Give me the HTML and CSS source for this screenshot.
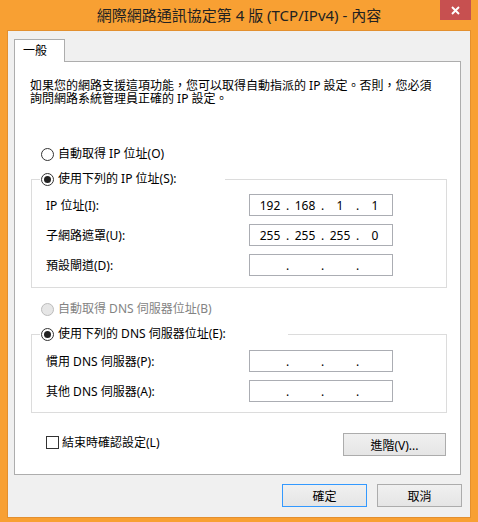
FILE: index.html
```html
<!DOCTYPE html>
<html lang="zh-Hant">

<head>
	<meta charset="UTF-8">
	<meta name="viewport" content="width=device-width, initial-scale=1.0">
	<title>網際網路通訊協定第 4 版 (TCP/IPv4) - 內容</title>
	<link rel="stylesheet" href="styles.css">
</head>

<body>
	<div class="window">
		<div class="titlebar">
			<div class="title">網際網路通訊協定第 4 版 (TCP/IPv4) - 內容</div>
			<div class="close">
				<svg width="9" height="9" viewBox="0 0 9 9">
					<path d="M1 1 L8 8 M8 1 L1 8" stroke="#fff" stroke-width="1.9" fill="none" />
				</svg>
			</div>
		</div>

		<div class="client">
			<div class="tabs">
				<div class="tab">一般</div>
			</div>

			<div class="panel">
				<div class="desc">
					<div>如果您的網路支援這項功能，您可以取得自動指派的 IP 設定。否則，您必須</div>
					<div>詢問網路系統管理員正確的 IP 設定。</div>
				</div>

				<div class="option auto-ip">
					<span class="radio"></span>自動取得 IP 位址(O)
				</div>

				<fieldset class="group group-ip">
					<legend class="option legend-ip"><span class="radio checked"></span>使用下列的 IP 位址(S):</legend>
					<div class="fields">
						<div class="field">
							<span>IP 位址(I):</span>
							<div class="ipbox">
								<span class="octet">192</span><span class="dot">.</span><span class="octet">168</span><span class="dot">.</span><span class="octet">1</span><span class="dot">.</span><span class="octet">1</span>
							</div>
						</div>
						<div class="field">
							<span>子網路遮罩(U):</span>
							<div class="ipbox">
								<span class="octet">255</span><span class="dot">.</span><span class="octet">255</span><span class="dot">.</span><span class="octet">255</span><span class="dot">.</span><span class="octet">0</span>
							</div>
						</div>
						<div class="field">
							<span>預設閘道(D):</span>
							<div class="ipbox">
								<span class="octet"></span><span class="dot">.</span><span class="octet"></span><span class="dot">.</span><span class="octet"></span><span class="dot">.</span><span class="octet"></span>
							</div>
						</div>
					</div>
				</fieldset>

				<div class="option auto-dns disabled">
					<span class="radio"></span>自動取得 DNS 伺服器位址(B)
				</div>

				<fieldset class="group group-dns">
					<legend class="option legend-dns"><span class="radio checked"></span>使用下列的 DNS 伺服器位址(E):</legend>
					<div class="fields">
						<div class="field">
							<span>慣用 DNS 伺服器(P):</span>
							<div class="ipbox">
								<span class="octet"></span><span class="dot">.</span><span class="octet"></span><span class="dot">.</span><span class="octet"></span><span class="dot">.</span><span class="octet"></span>
							</div>
						</div>
						<div class="field">
							<span>其他 DNS 伺服器(A):</span>
							<div class="ipbox">
								<span class="octet"></span><span class="dot">.</span><span class="octet"></span><span class="dot">.</span><span class="octet"></span><span class="dot">.</span><span class="octet"></span>
							</div>
						</div>
					</div>
				</fieldset>

				<div class="bottom-row">
					<div class="check-row"><span class="checkbox"></span>結束時確認設定(L)</div>
					<button class="btn btn-advanced">進階(V)...</button>
				</div>
			</div>

			<div class="footer">
				<button class="btn btn-default">確定</button>
				<button class="btn">取消</button>
			</div>
		</div>
	</div>
</body>

</html>
```

FILE: styles.css
```css
body {
	margin: 0;
	font-family: "Noto Sans", "Noto Sans CJK TC", sans-serif;
	font-size: 12px;
	color: #000;
}

.window {
	width: 478px;
	height: 522px;
	background-color: #f8a033;
	display: flex;
	flex-direction: column;
}

/* title bar */
.titlebar {
	height: 30px;
	display: grid;
	grid-template-columns: 1fr auto 1fr;
}

.title {
	grid-column: 2;
	font-size: 15px;
	line-height: 30px;
	color: #222;
	white-space: nowrap;
}

.close {
	grid-column: 3;
	justify-self: end;
	width: 31px;
	height: 20px;
	margin-right: 7px;
	background-color: #c75050;
	display: flex;
	justify-content: center;
	align-items: center;
}

/* client area */
.client {
	box-sizing: border-box;
	height: 488px;
	margin: 0 7px 4px 7px;
	border: 1px solid #e3902f;
	background-color: #f0f0f0;
	padding: 8px 8px 10px 6px;
}

.tabs {
	display: flex;
}

.tab {
	box-sizing: border-box;
	width: 51px;
	height: 23px;
	padding-left: 8px;
	line-height: 22px;
	border: 1px solid #adadad;
	border-bottom: none;
	background-color: #fff;
	margin-bottom: -1px;
	position: relative;
	z-index: 1;
}

.panel {
	box-sizing: border-box;
	height: 414px;
	margin-right: 1px;
	border: 1px solid #adadad;
	background-color: #fff;
	padding: 17px 13px 18px 15px;
}

.desc {
	line-height: 13px;
	white-space: nowrap;
}

.desc div {
	height: 13px;
}

/* radios and checkbox */
.option {
	display: flex;
	align-items: center;
	height: 16px;
	line-height: 16px;
	white-space: nowrap;
}

.auto-ip {
	margin-top: 41px;
	padding-left: 11px;
}

.auto-dns {
	margin-top: 13px;
	padding-left: 11px;
}

.disabled {
	color: #838383;
}

.radio {
	box-sizing: border-box;
	width: 13px;
	height: 13px;
	margin-right: 4px;
	border: 1px solid #333;
	border-radius: 50%;
	background-color: #fff;
	display: flex;
	justify-content: center;
	align-items: center;
	flex-shrink: 0;
}

.radio.checked::after {
	content: "";
	width: 7px;
	height: 7px;
	border-radius: 50%;
	background-color: #222;
}

.disabled .radio {
	border-color: #bcbcbc;
	background-color: #e6e6e6;
}

.checkbox {
	box-sizing: border-box;
	width: 13px;
	height: 13px;
	margin-right: 3px;
	border: 1px solid #333;
	background-color: #fff;
}

/* group boxes */
.group {
	margin: 9px 0 0 1px;
	border: 1px solid #dcdcdc;
	min-width: 0;
}

.group-ip {
	padding: 7px 0 11px 8px;
}

.group-dns {
	padding: 8px 0 10px 8px;
}

.group legend {
	padding: 0 0 0 1px;
	box-sizing: border-box;
}

.legend-ip {
	width: 185px;
}

.legend-dns {
	width: 248px;
}

.fields {
	display: flex;
	flex-direction: column;
	gap: 8px;
	padding-left: 6px;
}

.field {
	display: grid;
	grid-template-columns: 203px 144px;
	align-items: center;
	height: 22px;
	white-space: nowrap;
}

.ipbox {
	box-sizing: border-box;
	height: 22px;
	border: 1px solid #abadb3;
	padding-left: 5px;
	display: flex;
	align-items: center;
}

.octet {
	width: 30px;
	text-align: center;
}

.dot {
	width: 5px;
	text-align: center;
}

.bottom-row {
	margin: 20px 1px 0 0;
	padding-left: 16px;
	display: flex;
	justify-content: space-between;
	align-items: flex-start;
}

.check-row {
	display: flex;
	align-items: center;
	height: 16px;
	margin-top: 1px;
	white-space: nowrap;
}

/* buttons */
.btn {
	box-sizing: border-box;
	width: 85px;
	height: 23px;
	padding: 0;
	font-family: inherit;
	font-size: 12px;
	color: #000;
	border: 1px solid #acacac;
	background: linear-gradient(#f0f0f0, #e5e5e5);
}

.btn-advanced {
	width: 103px;
}

.btn-default {
	border-color: #3399ff;
}

.footer {
	margin-top: 9px;
	display: flex;
	justify-content: flex-end;
	gap: 10px;
}
```
